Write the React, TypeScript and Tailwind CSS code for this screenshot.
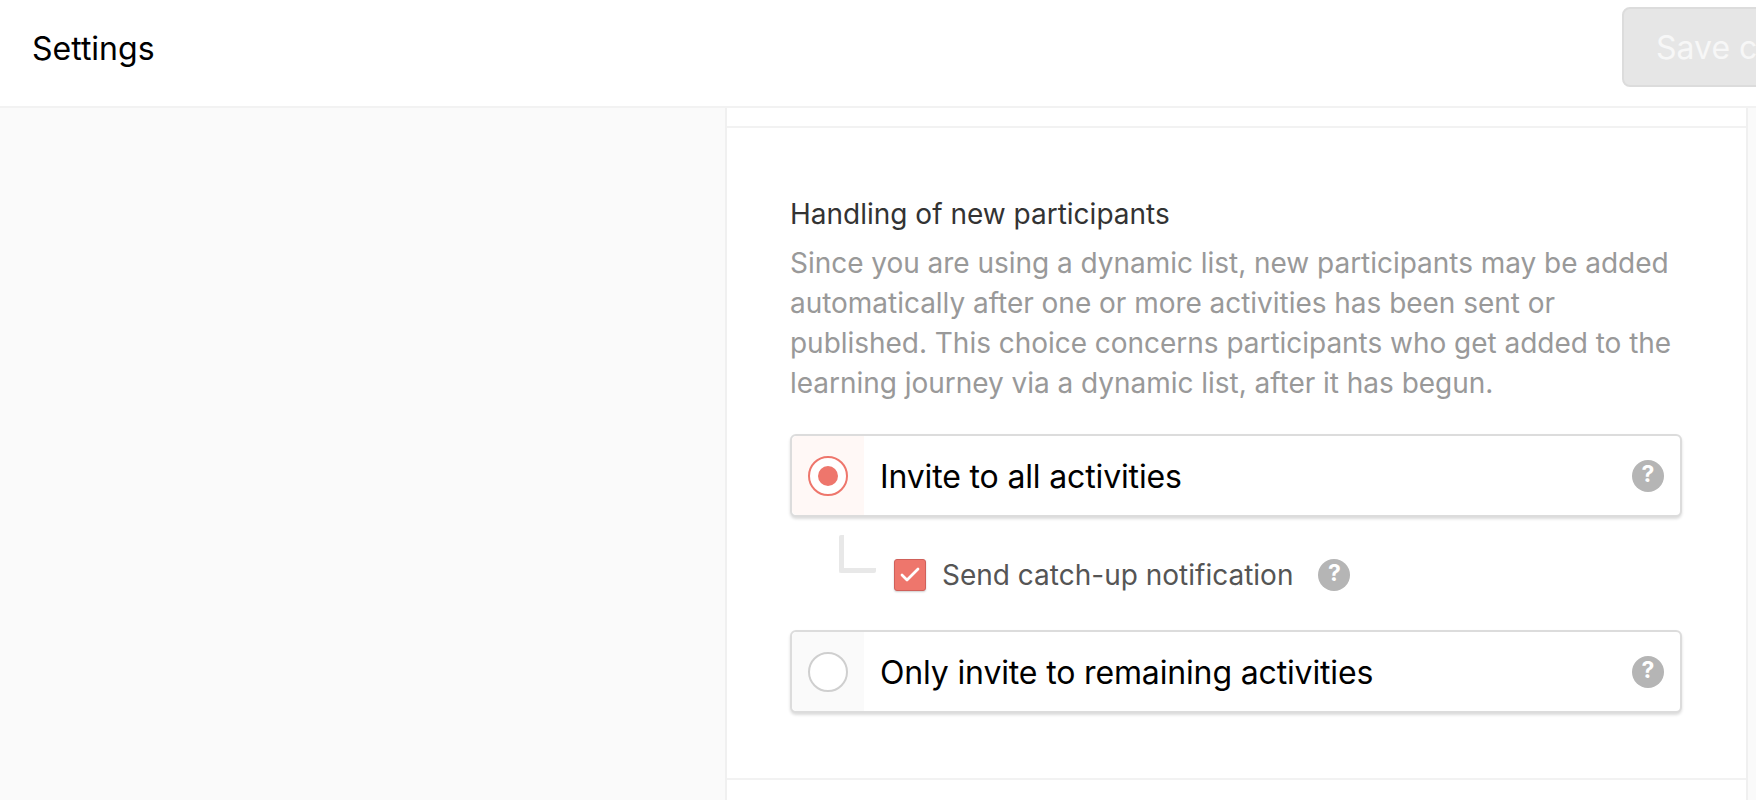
import React from 'react';
import { Check } from 'lucide-react';

const HelpIcon = () => (
  <span className="flex h-8 w-8 shrink-0 items-center justify-center rounded-full bg-[#b5b5b5] pb-[2px] text-[23px] leading-none font-bold text-white">
    ?
  </span>
);

const RadioCard = ({ label, selected }: { label: string; selected?: boolean }) => (
  <div className="flex h-[83px] items-stretch rounded-[6px] border-2 border-[#dcdcdc] bg-white shadow-[0_2px_3px_rgba(0,0,0,0.14)]">
    <div className={`flex w-[72px] items-center justify-center rounded-l-[5px] ${selected ? 'bg-[#fff8f6]' : 'bg-[#fafafa]'}`}>
      <div className={`flex h-10 w-10 items-center justify-center rounded-full border-2 bg-white ${selected ? 'border-[#ee766c]' : 'border-[#cfcfcf]'}`}>
        {selected && <div className="h-5 w-5 rounded-full bg-[#ee766c]" />}
      </div>
    </div>
    <div className="flex flex-1 items-center justify-between pr-4 pl-4">
      <span className="pt-[2px] text-[32px] tracking-[-0.15px] text-black">{label}</span>
      <HelpIcon />
    </div>
  </div>
);

export default function App() {
  return (
    <div className="h-[800px] w-[1756px] overflow-hidden bg-white font-['Inter',sans-serif]">
      {/* Header */}
      <div className="flex h-[108px] items-start border-b-2 border-[#f2f2f2] bg-white">
        <div className="w-[1622px] shrink-0 pt-[30px] pl-8 text-[32px] leading-[38px] text-black">Settings</div>
        <button className="mt-[7px] h-[80px] w-[220px] shrink-0 overflow-hidden rounded-[8px] border-2 border-[#dcdcdc] bg-[#e6e6e6] pt-[2px] pl-[32px] text-left text-[32px] whitespace-nowrap text-[#f7f7f7]">
          Save c
        </button>
      </div>

      <div className="flex h-[692px]">
        <div className="w-[725px] shrink-0 bg-[#fafafa]" />

        {/* Panel */}
        <div className="w-[1023px] shrink-0 border-x-2 border-[#f0f0f0] bg-white">
          <div className="h-[20px] border-b-2 border-[#f2f2f2]" />
          <div className="h-[652px] border-b-2 border-[#f2f2f2] pt-[66px] pr-[64px] pl-[63px]">
            <h3 className="text-[28px] leading-[40px] font-normal text-[#333333]">Handling of new participants</h3>
            <p className="mt-[9px] text-[28px] leading-[40px] tracking-[-0.03px] text-[#999999]">
              Since you are using a dynamic list, new participants may be added automatically after one or more activities has been sent or published. This choice concerns participants who get added to the learning journey via a dynamic list, after it has begun.
            </p>

            <div className="mt-[31px]">
              <RadioCard label="Invite to all activities" selected />
            </div>

            <div className="flex h-[113px] items-center pt-[2px] pl-[49px]">
              <div className="mb-[42px] h-[38px] w-[37px] shrink-0 rounded-[2px] border-b-[5px] border-l-[5px] border-[#e8e8e8]" />
              <div className="ml-[18px] flex h-8 w-8 shrink-0 items-center justify-center rounded-[3px] border border-[#d0605a] bg-[#ee766c] shadow-[0_1px_2px_rgba(0,0,0,0.2)]">
                <Check size={24} strokeWidth={2.75} className="text-white" />
              </div>
              <span className="ml-4 text-[28px] text-[#555555]">Send catch-up notification</span>
              <div className="ml-[25px]">
                <HelpIcon />
              </div>
            </div>

            <RadioCard label="Only invite to remaining activities" />
          </div>
        </div>

        <div className="flex-1 bg-[#fafafa]" />
      </div>
    </div>
  );
}
